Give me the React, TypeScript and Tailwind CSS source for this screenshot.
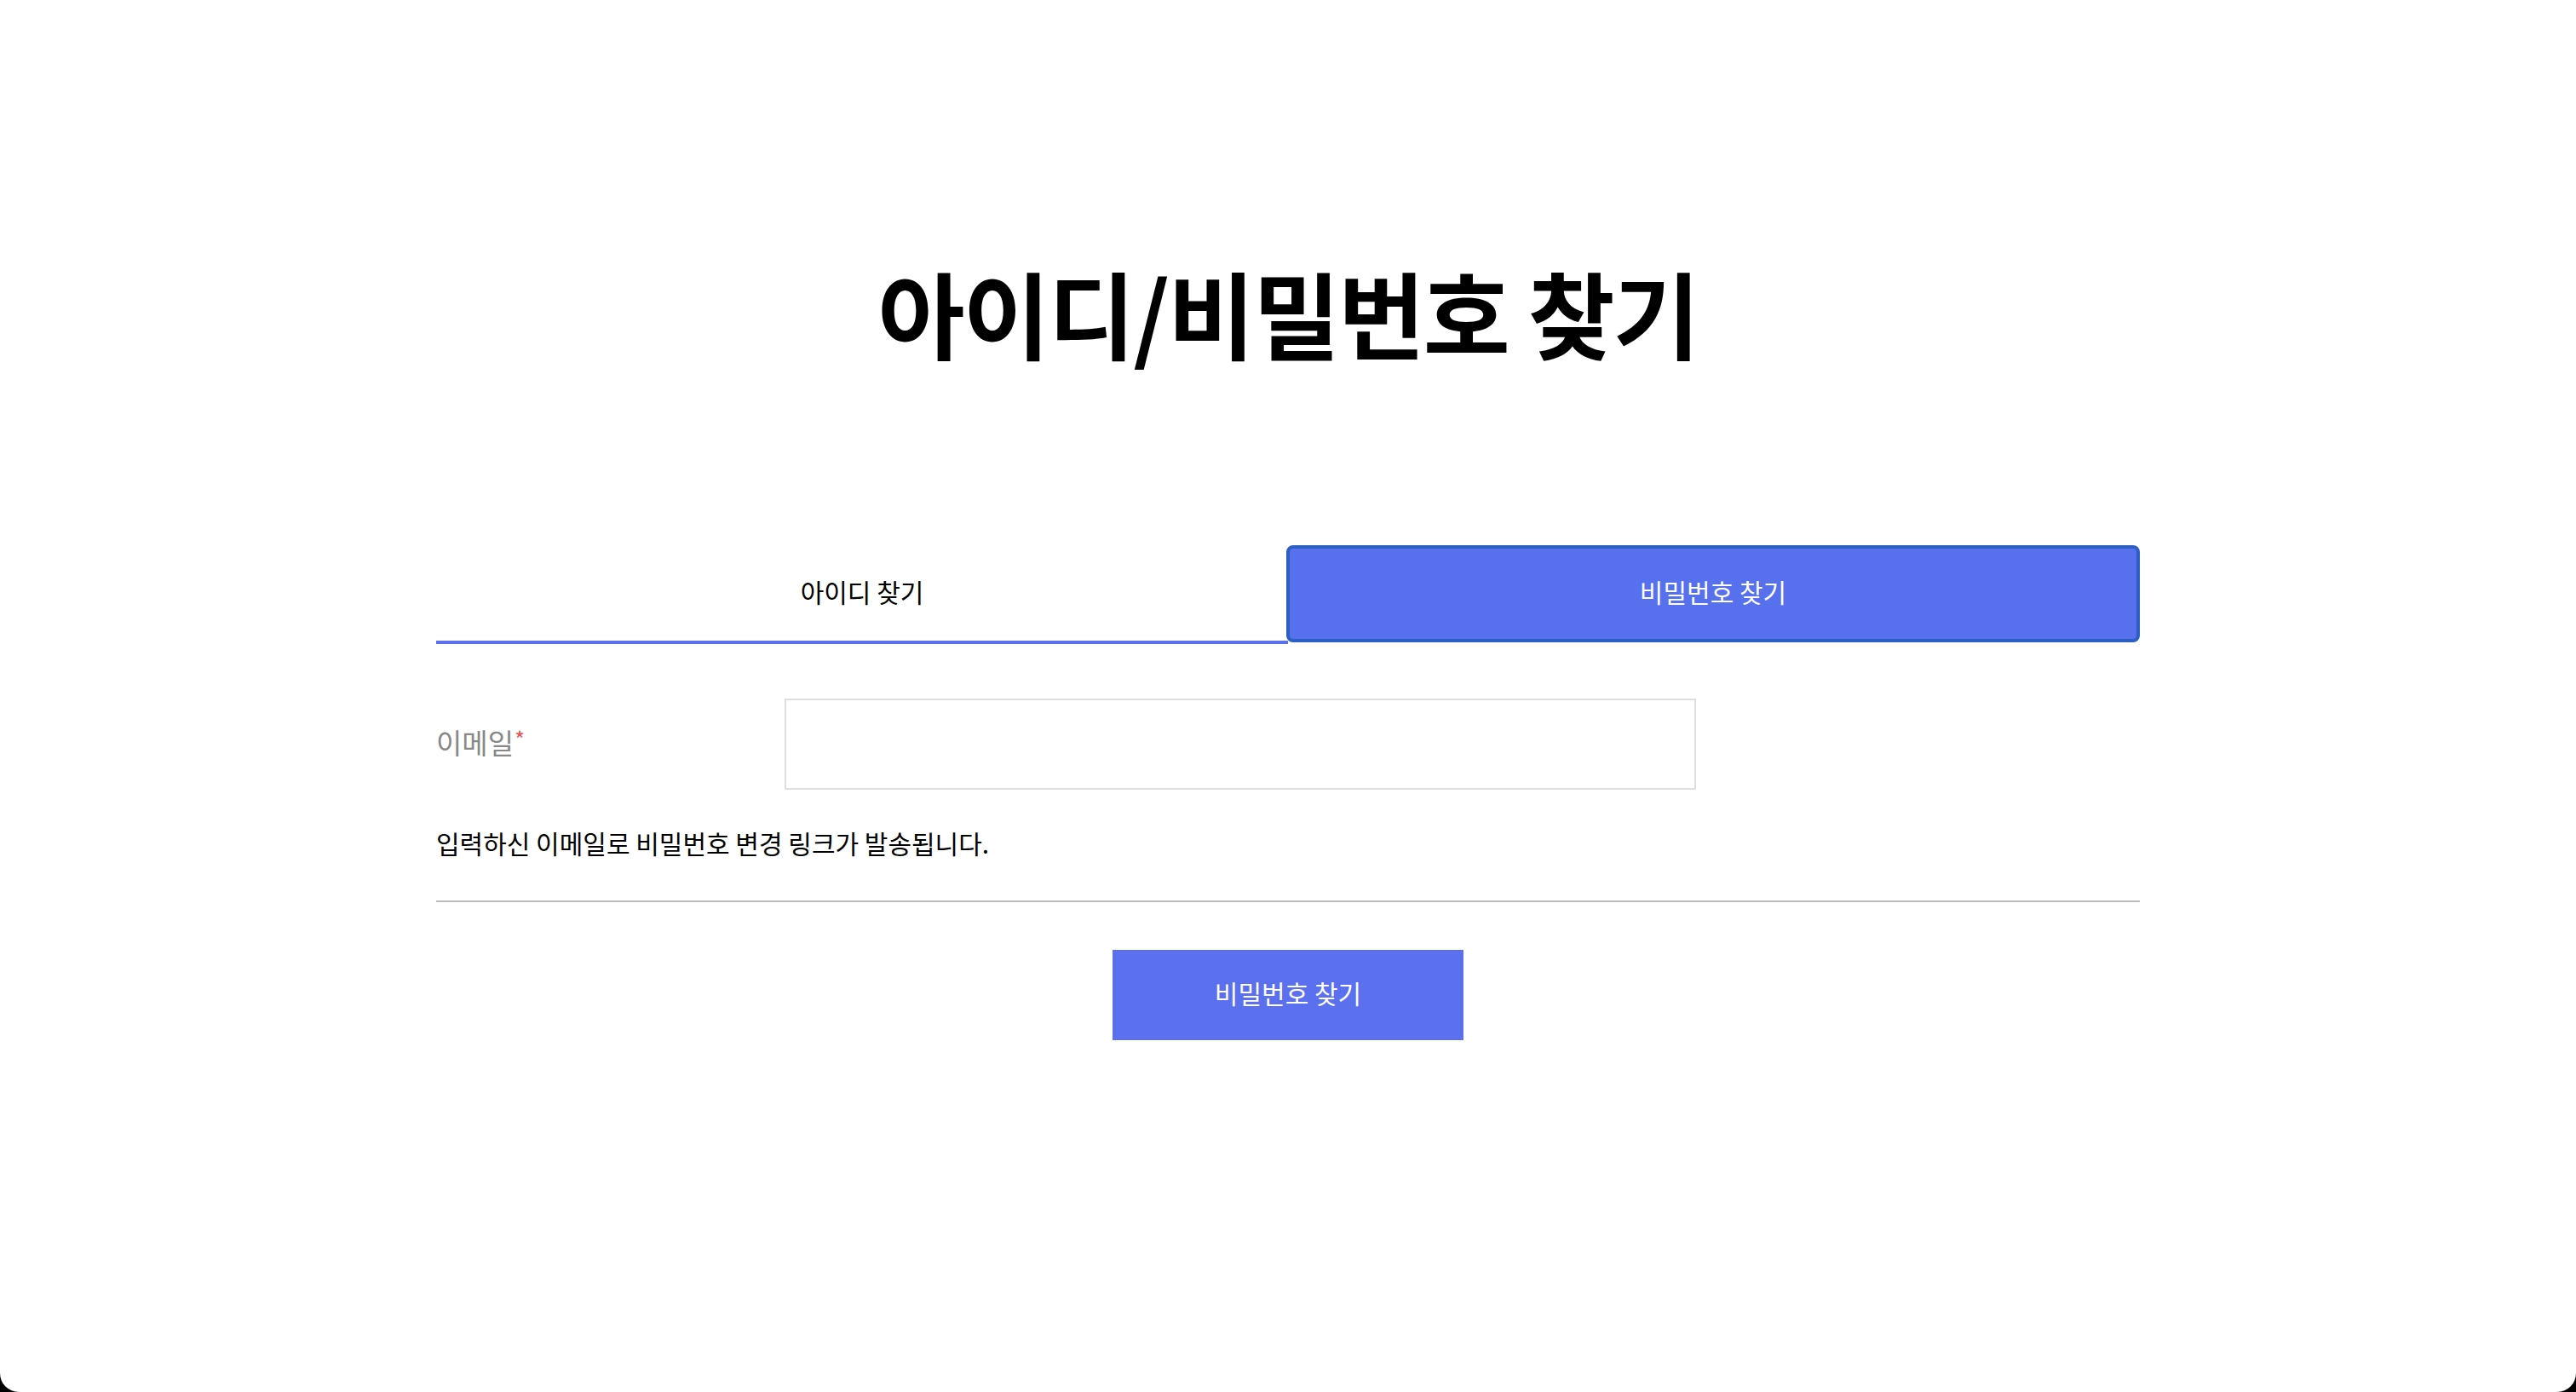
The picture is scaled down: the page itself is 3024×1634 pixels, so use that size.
import { useState } from "react";

const font = { fontFamily: '"Noto Sans CJK KR", "Noto Sans", sans-serif' };

export default function App() {
  const [tab, setTab] = useState<"id" | "pw">("pw");
  const [email, setEmail] = useState("");

  return (
    <div className="min-h-screen bg-black" style={font}>
      <div className="flex min-h-[1634px] flex-col items-center rounded-b-[22px] bg-white pt-[310px]">
        <h1 className="text-[111px] font-bold leading-none tracking-[-0.02em] text-black">
          아이디/비밀번호 찾기
        </h1>

        <div className="mt-[219px] w-[2000px]">
          <div className="grid grid-cols-2 items-end">
            <button
              type="button"
              onClick={() => setTab("id")}
              className="h-[116px] border-b-4 border-[#5a70ec] pb-[4px] text-[30px] text-black"
            >
              아이디 찾기
            </button>
            <button
              type="button"
              onClick={() => setTab("pw")}
              className="-ml-[2px] mb-[2px] h-[114px] rounded-[8px] border-4 border-[#2b5fc4] bg-[#5770ed] pb-[6px] text-[30px] text-white"
            >
              비밀번호 찾기
            </button>
          </div>

          <div className="mt-[64px] flex items-center">
            <label
              htmlFor="email"
              className="w-[409px] pb-[4px] text-[33px] text-[#888888]"
            >
              이메일
              <span className="relative -top-[7px] ml-[1px] text-[26px] text-[#e05555]">
                *
              </span>
            </label>
            <input
              id="email"
              type="email"
              value={email}
              onChange={(e) => setEmail(e.target.value)}
              className="h-[107px] w-[1070px] border-2 border-[#dedede] px-6 text-[30px] outline-none"
            />
          </div>

          <p className="mt-[40px] text-[30px] leading-[45px] text-black">
            입력하신 이메일로 비밀번호 변경 링크가 발송됩니다.
          </p>

          <div className="mt-[45px] h-[2px] bg-[#bdbdbd]" />

          <div className="mt-[56px] flex justify-center">
            <button
              type="button"
              className="h-[106px] w-[412px] bg-[#5a70ee] pb-[6px] text-[30px] text-white"
            >
              {tab === "pw" ? "비밀번호 찾기" : "아이디 찾기"}
            </button>
          </div>
        </div>
      </div>
    </div>
  );
}
